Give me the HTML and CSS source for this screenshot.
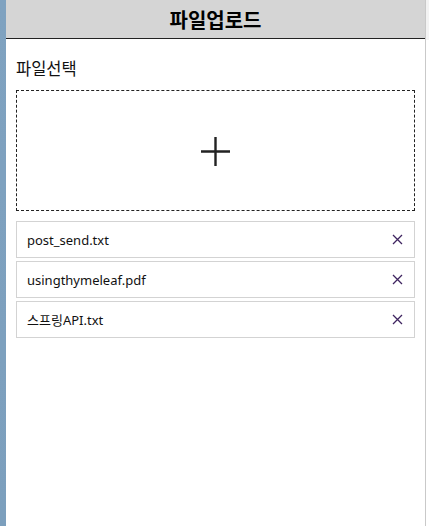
FILE: index.html
```html
<!DOCTYPE html>
<html lang="ko">
<head>
<meta charset="utf-8">
<title>파일업로드</title>
<link rel="stylesheet" href="styles.css">
</head>
<body>
<div class="layout">
  <div class="strip"></div>
  <div class="panel">
    <header class="header">파일업로드</header>
    <main class="content">
      <div class="label">파일선택</div>
      <div class="dropzone">
        <svg class="plus" width="31" height="31" viewBox="0 0 31 31"><path d="M15.5 1V30M1 15.5H30" stroke="#222" stroke-width="2.4" fill="none"/></svg>
      </div>
      <ul class="files">
        <li class="file"><span class="name">post_send.txt</span><svg class="x" width="11" height="11" viewBox="0 0 11 11"><path d="M1 1L10 10M10 1L1 10" stroke="#3f2460" stroke-width="1.3" fill="none"/></svg></li>
        <li class="file"><span class="name">usingthymeleaf.pdf</span><svg class="x" width="11" height="11" viewBox="0 0 11 11"><path d="M1 1L10 10M10 1L1 10" stroke="#3f2460" stroke-width="1.3" fill="none"/></svg></li>
        <li class="file"><span class="name">스프링API.txt</span><svg class="x" width="11" height="11" viewBox="0 0 11 11"><path d="M1 1L10 10M10 1L1 10" stroke="#3f2460" stroke-width="1.3" fill="none"/></svg></li>
      </ul>
    </main>
  </div>
  <div class="edge"></div>
</div>
</body>
</html>
```
FILE: styles.css
```css
html, body {
  margin: 0;
  padding: 0;
  height: 100%;
  background: #fff;
  font-family: "Noto Sans", "Noto Sans CJK KR", sans-serif;
  color: #111;
}
.layout {
  display: flex;
  height: 526px;
}
.strip {
  width: 6px;
  flex: none;
  background: linear-gradient(to bottom, #7fa2c0, #7c9fbd);
}
.panel {
  width: 419px;
  flex: none;
  border-right: 1px solid #c9c9c9;
  display: flex;
  flex-direction: column;
}
.edge {
  flex: 1;
  background: linear-gradient(to bottom, #f3f3f3 0, #f3f3f3 40px, #fff 40px);
}
.header {
  height: 38px;
  background: #d5d5d5;
  border-bottom: 1px solid #222;
  display: flex;
  align-items: center;
  justify-content: center;
  font-family: "Noto Sans CJK KR", sans-serif;
  font-weight: 700;
  font-size: 20px;
  color: #000;
}
.content {
  padding: 18px 10px 0 10px;
}
.label {
  font-family: "Noto Sans CJK KR", sans-serif;
  font-size: 16.5px;
  line-height: 22px;
  margin-bottom: 11px;
}
.dropzone {
  height: 119px;
  border: 1px dashed #222;
  display: flex;
  align-items: center;
  justify-content: center;
}
.plus {
  display: block;
  margin-top: 2px;
}
.files {
  list-style: none;
  margin: 10px 0 0 0;
  padding: 0;
  display: flex;
  flex-direction: column;
  gap: 3px;
}
.file {
  height: 35px;
  border: 1px solid #d3d3d3;
  display: flex;
  align-items: center;
  justify-content: space-between;
  padding: 0 11px 0 10px;
  font-size: 13px;
}
.name {
  font-family: "Noto Sans", "Noto Sans CJK KR", sans-serif;
  color: #111;
}
.x {
  display: block;
}
```
